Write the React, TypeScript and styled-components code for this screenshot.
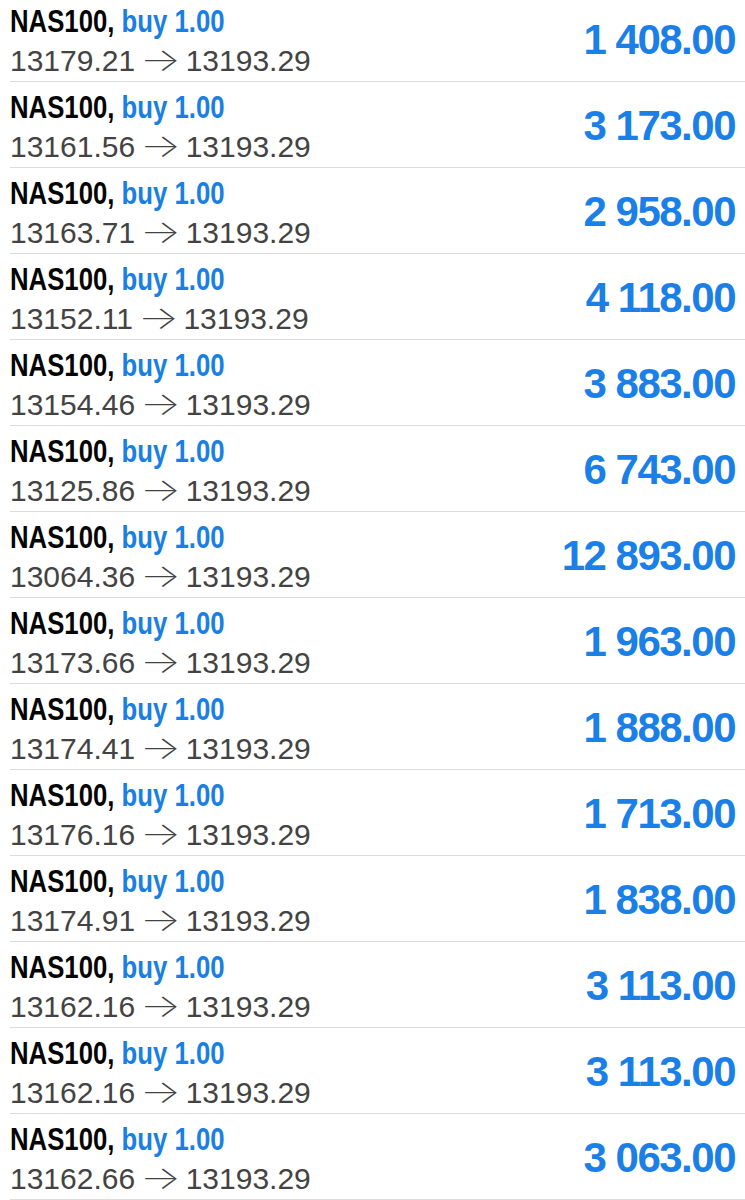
import React from 'react';
import styled, { createGlobalStyle } from 'styled-components';

const GlobalStyle = createGlobalStyle`
  html, body {
    margin: 0;
    padding: 0;
    background: #ffffff;
  }
  body {
    font-family: "Liberation Sans", Arial, sans-serif;
  }
`;

const List = styled.div`
  display: flex;
  flex-direction: column;
  margin-top: -4px;
  width: 745px;
`;

const Row = styled.div`
  display: flex;
  align-items: center;
  justify-content: space-between;
  height: 85px;
  margin-left: 10px;
  padding-right: 10px;
  border-bottom: 1px solid #dcdcdc;
`;

const Info = styled.div`
  display: flex;
  flex-direction: column;
  align-items: flex-start;
  padding-top: 4px;
`;

const Title = styled.div`
  display: inline-block;
  font-weight: 700;
  font-size: 31px;
  line-height: 39px;
  color: #050505;
  white-space: nowrap;
  transform: scaleX(0.83);
  transform-origin: left center;
`;

const Side = styled.span`
  color: #1a7fe3;
`;

const Prices = styled.div`
  font-size: 30px;
  line-height: 39px;
  color: #434343;
  white-space: nowrap;
`;

const Arrow = styled.span`
  display: inline-block;
  font-family: Inter, "Liberation Sans", sans-serif;
  font-weight: 200;
  font-size: 32px;
  line-height: 30px;
  margin: 0 10px;
  transform: scaleX(1.35);
`;

const Profit = styled.div`
  font-weight: 700;
  font-size: 42px;
  color: #1a7fe6;
  letter-spacing: -1.5px;
  padding-top: 2px;
`;

type Trade = { open: string; profit: string };

const trades: Trade[] = [
  { open: '13179.21', profit: '1 408.00' },
  { open: '13161.56', profit: '3 173.00' },
  { open: '13163.71', profit: '2 958.00' },
  { open: '13152.11', profit: '4 118.00' },
  { open: '13154.46', profit: '3 883.00' },
  { open: '13125.86', profit: '6 743.00' },
  { open: '13064.36', profit: '12 893.00' },
  { open: '13173.66', profit: '1 963.00' },
  { open: '13174.41', profit: '1 888.00' },
  { open: '13176.16', profit: '1 713.00' },
  { open: '13174.91', profit: '1 838.00' },
  { open: '13162.16', profit: '3 113.00' },
  { open: '13162.16', profit: '3 113.00' },
  { open: '13162.66', profit: '3 063.00' },
];

const App = () => {
  return (
    <>
      <GlobalStyle />
      <List>
        {trades.map((t, i) => (
          <Row key={i}>
            <Info>
              <Title>
                NAS100, <Side>buy 1.00</Side>
              </Title>
              <Prices>
                {t.open}
                <Arrow>→</Arrow>
                13193.29
              </Prices>
            </Info>
            <Profit>{t.profit}</Profit>
          </Row>
        ))}
      </List>
    </>
  );
};

export default App;
